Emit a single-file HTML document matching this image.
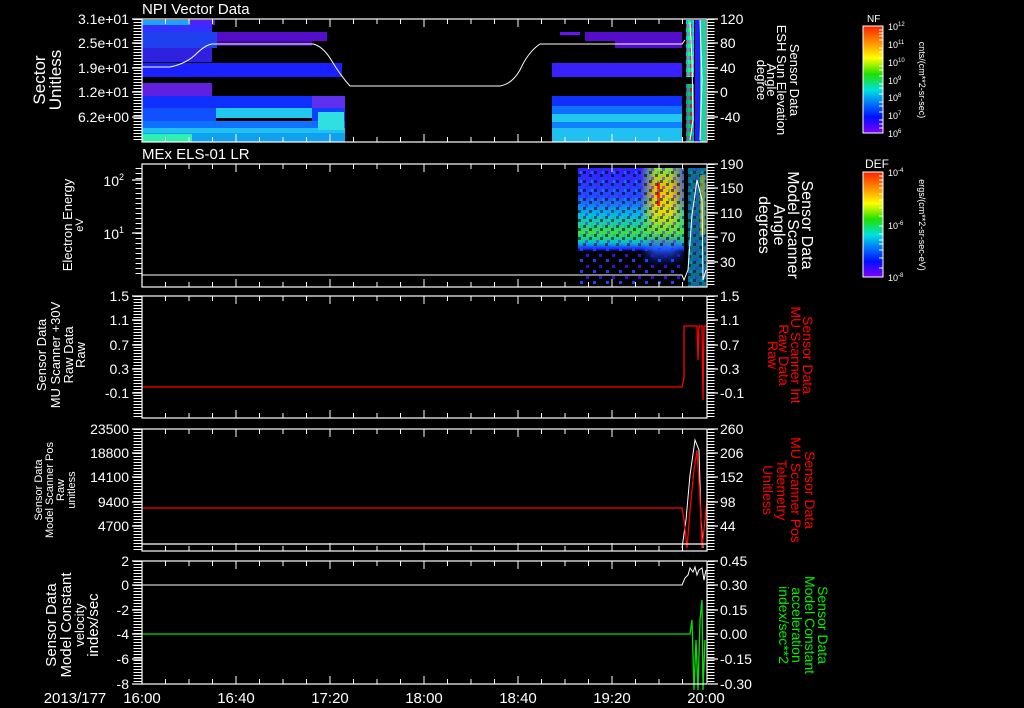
<!DOCTYPE html>
<html><head><meta charset="utf-8"><style>
html,body{margin:0;padding:0;background:#000;width:1024px;height:708px;overflow:hidden}
svg{display:block}
text{font-family:"Liberation Sans",sans-serif;fill:#fff}
</style></head><body>
<svg width="1024" height="708" viewBox="0 0 1024 708" xmlns="http://www.w3.org/2000/svg">
<defs>
<linearGradient id="rb" x1="0" y1="0" x2="0" y2="1">
<stop offset="0" stop-color="#ff2000"/><stop offset="0.2" stop-color="#ffb000"/><stop offset="0.3" stop-color="#ffff00"/>
<stop offset="0.45" stop-color="#20e000"/><stop offset="0.6" stop-color="#00e0e0"/><stop offset="0.75" stop-color="#0060ff"/>
<stop offset="0.85" stop-color="#0010ff"/><stop offset="1" stop-color="#8000ff"/></linearGradient>
<linearGradient id="p2" x1="0" y1="0" x2="0" y2="1">
<stop offset="0" stop-color="#3020ff"/><stop offset="0.25" stop-color="#2050ff"/><stop offset="0.4" stop-color="#00c0e0"/>
<stop offset="0.55" stop-color="#40e040"/><stop offset="0.63" stop-color="#00c0d0"/><stop offset="0.68" stop-color="#2020ff"/>
<stop offset="0.7" stop-color="#000" /><stop offset="1" stop-color="#000"/></linearGradient>
<linearGradient id="hot" x1="0" y1="0" x2="0" y2="1">
<stop offset="0" stop-color="#80e040"/><stop offset="0.2" stop-color="#f0c000"/><stop offset="0.45" stop-color="#e0e000"/>
<stop offset="0.65" stop-color="#60e040"/><stop offset="0.8" stop-color="#2060ff"/><stop offset="1" stop-color="#1010a0" stop-opacity="0"/></linearGradient>
<linearGradient id="hfade" x1="0" y1="0" x2="1" y2="0">
<stop offset="0" stop-color="#fff" stop-opacity="0"/><stop offset="0.35" stop-color="#fff" stop-opacity="1"/><stop offset="0.7" stop-color="#fff" stop-opacity="1"/><stop offset="1" stop-color="#fff" stop-opacity="0.3"/></linearGradient>
<mask id="hm"><rect x="640" y="168" width="44" height="100" fill="url(#hfade)"/></mask>
<pattern id="dots" width="13" height="11" patternUnits="userSpaceOnUse"><rect x="1" y="1" width="3" height="3" fill="#3010e0"/><rect x="8" y="6" width="3" height="3" fill="#2040ff"/></pattern>
<pattern id="noise" width="11" height="9" patternUnits="userSpaceOnUse"><rect x="0" y="0" width="3" height="3" fill="#000"/><rect x="6" y="3" width="3" height="3" fill="#000"/><rect x="2" y="6" width="3" height="3" fill="#6010ff"/><rect x="8" y="0" width="2" height="3" fill="#00a0ff"/></pattern>
<pattern id="str" width="5" height="8" patternUnits="userSpaceOnUse"><rect width="5" height="8" fill="#10c0f0"/><rect x="0" y="0" width="2" height="4" fill="#ff3000"/><rect x="3" y="4" width="2" height="4" fill="#20ff40"/></pattern>
</defs>

<!-- Panel 1 spectrogram -->
<g>
<rect x="142" y="20" width="48" height="5" fill="#20a0ff"/>
<rect x="190" y="20" width="25" height="5" fill="#5020ff"/>
<rect x="142" y="25" width="70" height="7" fill="#3030ff"/>
<rect x="142" y="32" width="75" height="16" fill="#2040f0"/>
<rect x="217" y="32" width="110" height="9" fill="#6a10ff" opacity="0.8"/>
<rect x="217" y="41" width="95" height="5" fill="#6a10ff" opacity="0.6"/>
<rect x="142" y="48" width="70" height="14" fill="#3020e0"/>
<rect x="142" y="63" width="200" height="14" fill="#1a20ff"/>
<rect x="142" y="83" width="70" height="14" fill="#6020e0"/>
<rect x="142" y="96" width="170" height="12" fill="#1030ff"/>
<rect x="312" y="96" width="33" height="12" fill="#6030f0"/>
<rect x="142" y="108" width="74" height="13" fill="#1050ff"/>
<rect x="216" y="108" width="96" height="10" fill="#20c8f0"/>
<rect x="312" y="108" width="33" height="13" fill="#1040ff"/>
<rect x="142" y="121" width="203" height="7" fill="#1070ff"/>
<rect x="142" y="128" width="203" height="5" fill="#20c0f0"/>
<rect x="142" y="133" width="203" height="9" fill="#10a0f0"/>
<rect x="142" y="134" width="50" height="8" fill="#30f0b0"/>
<rect x="318" y="112" width="26" height="18" fill="#30e0e0"/>
<rect x="585" y="32" width="97" height="9" fill="#6a10ff" opacity="0.8"/>
<rect x="615" y="41" width="67" height="7" fill="#6a10ff" opacity="0.8"/>
<rect x="560" y="32" width="20" height="3" fill="#6a10ff"/>
<rect x="552" y="63" width="130" height="14" fill="#3820ff"/>
<rect x="552" y="96" width="130" height="10" fill="#1030ff"/>
<rect x="552" y="106" width="130" height="8" fill="#1070ff"/>
<rect x="552" y="114" width="130" height="8" fill="#20c8f0"/>
<rect x="552" y="122" width="130" height="6" fill="#1080ff"/>
<rect x="552" y="128" width="130" height="14" fill="#20c0f0"/>
<rect x="686" y="20" width="8" height="57" fill="url(#str)"/>
<rect x="686" y="84" width="8" height="58" fill="url(#str)" opacity="0.8"/>
<rect x="695" y="20" width="5" height="122" fill="#2020ff"/>
<rect x="700" y="20" width="6" height="122" fill="#20d0a0"/>
</g>
<!-- panel 2 spectrogram -->
<rect x="578" y="168" width="106" height="119" fill="url(#p2)"/>
<rect x="640" y="168" width="44" height="100" fill="url(#hot)" mask="url(#hm)"/>
<rect x="657" y="182" width="3" height="24" fill="#ff2000"/>
<rect x="578" y="168" width="106" height="78" fill="url(#noise)" opacity="0.55"/>
<rect x="578" y="246" width="106" height="41" fill="url(#dots)"/>
<rect x="688" y="168" width="18" height="119" fill="#10a0d0" opacity="0.7"/>
<rect x="688" y="168" width="18" height="119" fill="url(#noise)" opacity="0.5"/>
<rect x="700" y="175" width="5" height="60" fill="#e0c000" opacity="0.5"/>

<!-- lines -->
<g fill="none" stroke="#fff" stroke-width="1">
<path d="M142 67 L170 67 Q185 64 195 55 Q205 45 212 44 L313 44 Q322 46 330 58 Q340 75 350 86 L500 86 Q512 84 520 70 Q528 52 540 44 L682 44 L685 40"/>
<path d="M690 22 L692 60 L693 120 L690 140 M700 20 L702 80 L700 140"/>
<path d="M142 275 L682 275 L684 280 L688 270 L692 215 L697 180 L702 200 L703 280 L706 270"/>
<path d="M142 585 L682 585 L685 578 L688 575 L690 568 L693 572 L695 567 L697 575 L699 570 L702 568 L704 580 L706 570"/>
<path d="M682 548 L686 520 L690 475 L695 440 L699 450 L701 520 L703 548" />
</g>
<g fill="none" stroke="#f00" stroke-width="1.3">
<path d="M142 387 L682 387 L684 378 L684 326 L697 326 L698 360 L699 326 L702 326 L703 400 L704 326 L707 326"/>
<path d="M142 508 L682 508 L684 520 L687 548 L690 510 L694 470 L697 450 L700 500 L702 548 L705 520 L707 500"/>
</g>
<path d="M142 634 L690 634 L692 620 L694 690 L696 640 L698 690 L700 620 L702 600 L703 690 L705 640" fill="none" stroke="#00e000" stroke-width="1.3"/>

<!-- axes frames -->
<g fill="none" stroke="#fff" stroke-width="1.2">
<rect x="142" y="19" width="565" height="123"/>
<rect x="142" y="164" width="565" height="123"/>
<rect x="142" y="296" width="565" height="122"/>
<rect x="142" y="429" width="565" height="122"/>
<rect x="142" y="561" width="565" height="123"/>
<path d="M142 544 L707 544" />
</g>
<g stroke="#fff" stroke-width="1">
<path id="tk" d="M165.5 19v5M189 19v5M212.5 19v5M236 19v8M259.5 19v5M283 19v5M306.5 19v5M330 19v8M353.5 19v5M377 19v5M400.5 19v5M424 19v8M447.5 19v5M471 19v5M494.5 19v5M518 19v8M541.5 19v5M565 19v5M588.5 19v5M612 19v8M635.5 19v5M659 19v5M682.5 19v5"/>
<path d="M165.5 142v-5M189 142v-5M212.5 142v-5M236 142v-8M259.5 142v-5M283 142v-5M306.5 142v-5M330 142v-8M353.5 142v-5M377 142v-5M400.5 142v-5M424 142v-8M447.5 142v-5M471 142v-5M494.5 142v-5M518 142v-8M541.5 142v-5M565 142v-5M588.5 142v-5M612 142v-8M635.5 142v-5M659 142v-5M682.5 142v-5"/>
<use href="#tk" y="145"/><use href="#tk" y="277"/><use href="#tk" y="410"/><use href="#tk" y="542"/>
<path id="bt" d="M165.5 287v-5M189 287v-5M212.5 287v-5M236 287v-8M259.5 287v-5M283 287v-5M306.5 287v-5M330 287v-8M353.5 287v-5M377 287v-5M400.5 287v-5M424 287v-8M447.5 287v-5M471 287v-5M494.5 287v-5M518 287v-8M541.5 287v-5M565 287v-5M588.5 287v-5M612 287v-8M635.5 287v-5M659 287v-5M682.5 287v-5"/>
<use href="#bt" y="131"/><use href="#bt" y="264"/><use href="#bt" y="397"/>
</g>
<g stroke="#fff" stroke-width="1" stroke-dasharray="1 2">
<path d="M134 19v123M135 19v123M136 19v123M137 19v123M138 19v123M139 19v123M140 19v123M141 19v123"/>
<path d="M708 19v123M709 19v123M710 19v123M711 19v123M712 19v123M713 19v123M714 19v123"/>
<path d="M708 164v123M709 164v123M710 164v123M711 164v123M712 164v123M713 164v123M714 164v123"/>
<path d="M134 296v122M135 296v122M136 296v122M137 296v122M138 296v122M139 296v122M140 296v122M141 296v122"/>
<path d="M708 296v122M709 296v122M710 296v122M711 296v122M712 296v122M713 296v122M714 296v122"/>
<path d="M134 429v122M135 429v122M136 429v122M137 429v122M138 429v122M139 429v122M140 429v122M141 429v122"/>
<path d="M708 429v122M709 429v122M710 429v122M711 429v122M712 429v122M713 429v122M714 429v122"/>
<path d="M134 561v123M135 561v123M136 561v123M137 561v123M138 561v123M139 561v123M140 561v123M141 561v123"/>
<path d="M708 561v123M709 561v123M710 561v123M711 561v123M712 561v123M713 561v123M714 561v123"/>
<path d="M136 168v110M137 168v110M138 168v110M139 168v110M140 168v110M141 168v110" stroke-dasharray="1 4"/>
</g>
<g stroke="#fff" stroke-width="1.2">
<path d="M132 19h10M132 43h10M132 68h10M132 92h10M132 117h10M708 19h10M708 43h10M708 68h10M708 92h10M708 117h10"/>
<path d="M132 180h10M132 233h10M708 164h10M708 188h10M708 213h10M708 237h10M708 262h10"/>
<path d="M132 296h10M132 320h10M132 345h10M132 369h10M132 393h10M708 296h10M708 320h10M708 345h10M708 369h10M708 393h10"/>
<path d="M132 429h10M132 453h10M132 477h10M132 502h10M132 526h10M708 429h10M708 453h10M708 477h10M708 502h10M708 526h10"/>
<path d="M132 561h10M132 585h10M132 610h10M132 634h10M132 659h10M132 684h10M708 561h10M708 585h10M708 610h10M708 634h10M708 659h10M708 684h10"/>
</g>

<text x="142" y="14" font-size="15">NPI Vector Data</text>
<text x="142" y="159" font-size="15">MEx ELS-01 LR</text>

<g font-size="14" text-anchor="end">
<text x="129" y="24">3.1e+01</text><text x="129" y="48">2.5e+01</text><text x="129" y="73">1.9e+01</text><text x="129" y="97">1.2e+01</text><text x="129" y="122">6.2e+00</text>
<text x="124" y="186">10<tspan font-size="9" dy="-6">2</tspan></text><text x="124" y="239">10<tspan font-size="9" dy="-6">1</tspan></text>
<text x="129" y="301">1.5</text><text x="129" y="325">1.1</text><text x="129" y="350">0.7</text><text x="129" y="374">0.3</text><text x="129" y="398">-0.1</text>
<text x="129" y="434">23500</text><text x="129" y="458">18800</text><text x="129" y="482">14100</text><text x="129" y="507">9400</text><text x="129" y="531">4700</text>
<text x="129" y="566">2</text><text x="129" y="590">0</text><text x="129" y="615">-2</text><text x="129" y="639">-4</text><text x="129" y="664">-6</text><text x="129" y="689">-8</text>
</g>
<g font-size="14">
<text x="720" y="24">120</text><text x="720" y="48">80</text><text x="720" y="73">40</text><text x="720" y="97">0</text><text x="720" y="122">-40</text>
<text x="720" y="169">190</text><text x="720" y="193">150</text><text x="720" y="218">110</text><text x="720" y="242">70</text><text x="720" y="267">30</text>
<text x="720" y="301">1.5</text><text x="720" y="325">1.1</text><text x="720" y="350">0.7</text><text x="720" y="374">0.3</text><text x="720" y="398">-0.1</text>
<text x="720" y="434">260</text><text x="720" y="458">206</text><text x="720" y="482">152</text><text x="720" y="507">98</text><text x="720" y="531">44</text>
<text x="720" y="566">0.45</text><text x="720" y="590">0.30</text><text x="720" y="615">0.15</text><text x="720" y="639">0.00</text><text x="720" y="664">-0.15</text><text x="720" y="689">-0.30</text>
</g>
<g font-size="15" text-anchor="middle">
<text x="75" y="703">2013/177</text>
<text x="142" y="703">16:00</text><text x="236" y="703">16:40</text><text x="330" y="703">17:20</text><text x="424" y="703">18:00</text><text x="518" y="703">18:40</text><text x="612" y="703">19:20</text><text x="706" y="703">20:00</text>
</g>

<g text-anchor="middle">
<text transform="translate(45,80) rotate(-90)" font-size="17">Sector</text>
<text transform="translate(61,80) rotate(-90)" font-size="17">Unitless</text>
<text transform="translate(72,225) rotate(-90)" font-size="13">Electron Energy</text>
<text transform="translate(83,225) rotate(-90)" font-size="11">eV</text>
<text transform="translate(46,355) rotate(-90)" font-size="13">Sensor Data</text>
<text transform="translate(60,355) rotate(-90)" font-size="13">MU Scanner +30V</text>
<text transform="translate(73,355) rotate(-90)" font-size="13">Raw Data</text>
<text transform="translate(85,355) rotate(-90)" font-size="13">Raw</text>
<text transform="translate(42,490) rotate(-90)" font-size="11">Sensor Data</text>
<text transform="translate(53,490) rotate(-90)" font-size="11">Model Scanner Pos</text>
<text transform="translate(64,490) rotate(-90)" font-size="11">Raw</text>
<text transform="translate(75,490) rotate(-90)" font-size="11">unitless</text>
<text transform="translate(56,625) rotate(-90)" font-size="15">Sensor Data</text>
<text transform="translate(71,625) rotate(-90)" font-size="15">Model Constant</text>
<text transform="translate(84,625) rotate(-90)" font-size="13">velocity</text>
<text transform="translate(98,625) rotate(-90)" font-size="15">index/sec</text>
</g>
<g text-anchor="middle">
<text transform="translate(790,80) rotate(90)" font-size="13">Sensor Data</text>
<text transform="translate(777,80) rotate(90)" font-size="13">ESH Sun Elevation</text>
<text transform="translate(767,80) rotate(90)" font-size="13">Angle</text>
<text transform="translate(757,80) rotate(90)" font-size="13">degree</text>
<text transform="translate(802,225) rotate(90)" font-size="16">Sensor Data</text>
<text transform="translate(788,225) rotate(90)" font-size="16">Model Scanner</text>
<text transform="translate(774,225) rotate(90)" font-size="16">Angle</text>
<text transform="translate(759,225) rotate(90)" font-size="16">degrees</text>
<text transform="translate(803,355) rotate(90)" font-size="14" style="fill:#f00">Sensor Data</text>
<text transform="translate(791,355) rotate(90)" font-size="14" style="fill:#f00">MU Scanner Int</text>
<text transform="translate(779,355) rotate(90)" font-size="14" style="fill:#f00">Raw Data</text>
<text transform="translate(768,355) rotate(90)" font-size="14" style="fill:#f00">Raw</text>
<text transform="translate(805,490) rotate(90)" font-size="14" style="fill:#f00">Sensor Data</text>
<text transform="translate(791,490) rotate(90)" font-size="14" style="fill:#f00">MU Scanner Pos</text>
<text transform="translate(777,490) rotate(90)" font-size="14" style="fill:#f00">Telemetry</text>
<text transform="translate(763,490) rotate(90)" font-size="14" style="fill:#f00">Unitless</text>
<text transform="translate(818,625) rotate(90)" font-size="14" style="fill:#0e0">Sensor Data</text>
<text transform="translate(805,625) rotate(90)" font-size="14" style="fill:#0e0">Model Constant</text>
<text transform="translate(792,625) rotate(90)" font-size="14" style="fill:#0e0">acceleration</text>
<text transform="translate(779,625) rotate(90)" font-size="14" style="fill:#0e0">index/sec**2</text>
</g>

<rect x="863" y="26" width="20" height="107" fill="url(#rb)" stroke="#fff" stroke-width="1"/>
<rect x="863" y="172" width="20" height="105" fill="url(#rb)" stroke="#fff" stroke-width="1"/>
<g stroke="#fff" stroke-width="1">
<path d="M879 30h4M879 33h4M879 36h4M879 40h4M879 48h4M879 52h4M879 58h4M879 66h4M879 70h4M879 76h4M879 84h4M879 88h4M879 94h4M879 102h4M879 106h4M879 112h4M879 120h4M879 124h4M879 128h4"/>
<path d="M879 176h4M879 180h4M879 184h4M879 188h4M879 194h4M879 200h4M879 208h4M879 216h4M879 226h4M879 234h4M879 240h4M879 244h4M879 250h4M879 258h4M879 268h4"/>
</g>
<text x="867" y="22" font-size="10">NF</text>
<text x="865" y="168" font-size="12">DEF</text>
<g font-size="9">
<text x="888" y="30">10<tspan font-size="6" dy="-4">12</tspan></text>
<text x="888" y="48">10<tspan font-size="6" dy="-4">11</tspan></text>
<text x="888" y="66">10<tspan font-size="6" dy="-4">10</tspan></text>
<text x="888" y="84">10<tspan font-size="6" dy="-4">9</tspan></text>
<text x="888" y="101">10<tspan font-size="6" dy="-4">8</tspan></text>
<text x="888" y="119">10<tspan font-size="6" dy="-4">7</tspan></text>
<text x="888" y="137">10<tspan font-size="6" dy="-4">6</tspan></text>
<text x="888" y="176">10<tspan font-size="6" dy="-4">-4</tspan></text>
<text x="888" y="229">10<tspan font-size="6" dy="-4">-6</tspan></text>
<text x="888" y="281">10<tspan font-size="6" dy="-4">-8</tspan></text>
</g>
<text transform="translate(919,80) rotate(90)" font-size="9" text-anchor="middle">cnts/(cm**2-sr-sec)</text>
<text transform="translate(919,225) rotate(90)" font-size="9" text-anchor="middle">ergs/(cm**2-sr-sec-eV)</text>
</svg>
</body></html>
